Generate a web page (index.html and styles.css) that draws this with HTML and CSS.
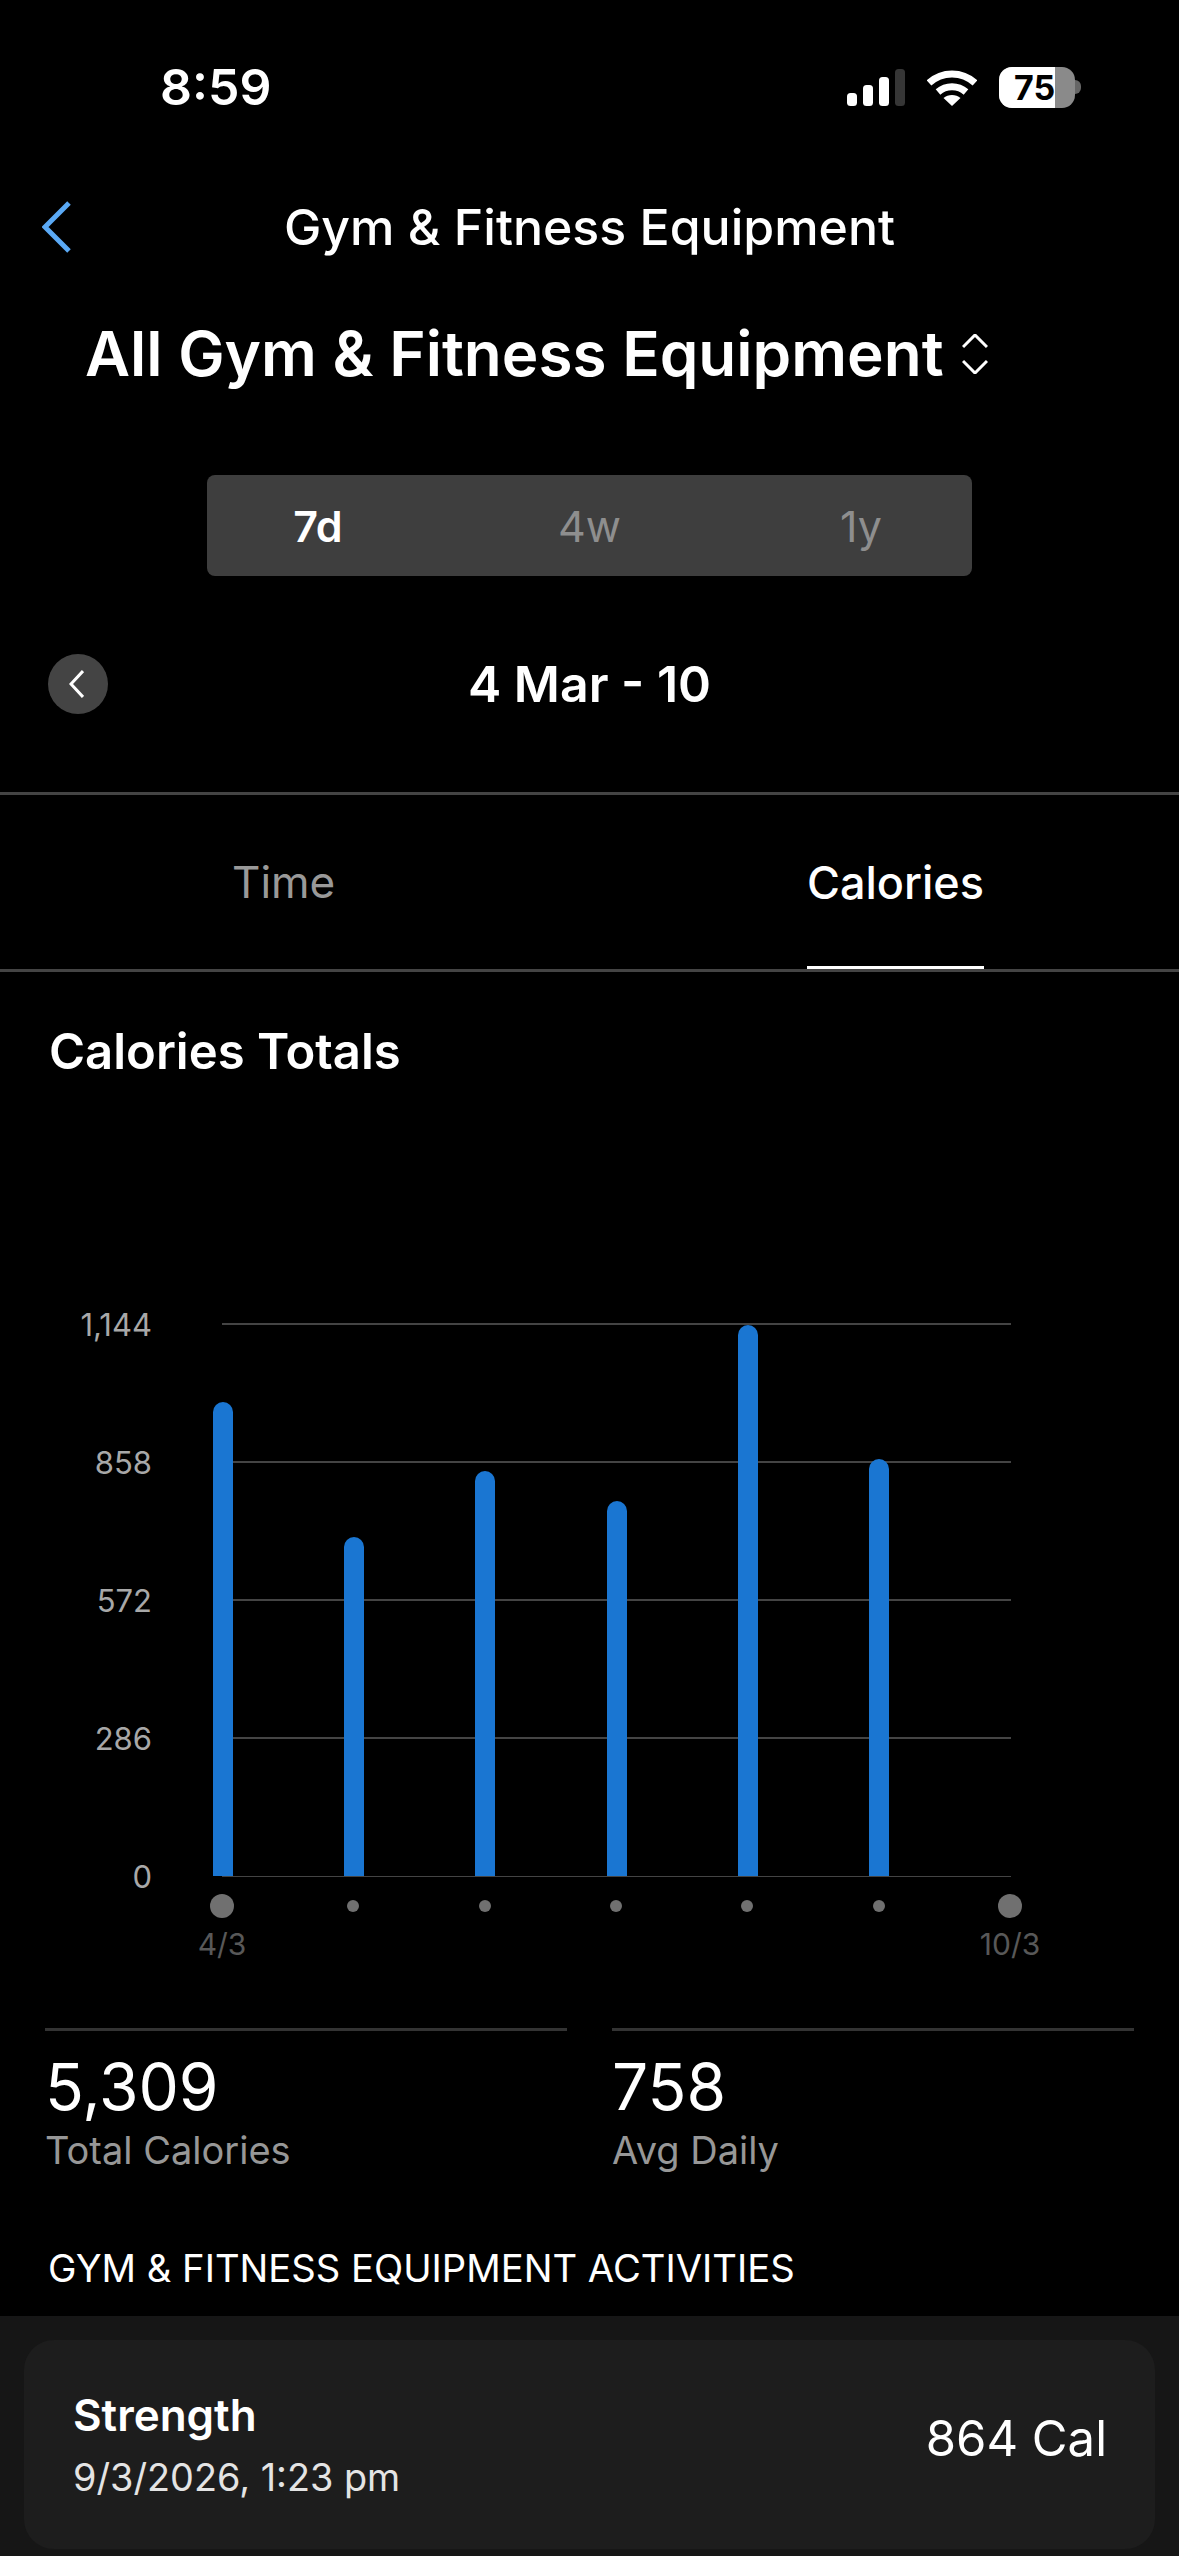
FILE: index.html
```html
<!DOCTYPE html>
<html lang="en">
<head>
  <meta charset="UTF-8" />
  <title>Gym &amp; Fitness Equipment</title>
  <link rel="stylesheet" href="styles.css">
</head>
<body>

  <!-- Status bar -->
  <div class="status-bar">
    <span class="clock">8:59</span>
    <div class="status-icons">
      <svg class="signal" width="58" height="37" viewBox="0 0 58 37">
        <rect x="0" y="24" width="10" height="13" rx="3.5" fill="#fff" />
        <rect x="16" y="16" width="10" height="21" rx="3.5" fill="#fff" />
        <rect x="32" y="8" width="10" height="29" rx="3.5" fill="#fff" />
        <rect x="48" y="0" width="10" height="37" rx="3.5" fill="#363636" />
      </svg>
      <svg class="wifi" width="50" height="37" viewBox="0 0 50 37">
        <path d="M2 14 C15 2 35 2 48 14" fill="none" stroke="#fff" stroke-width="7" />
        <path d="M11 23 C19 16 31 16 39 23" fill="none" stroke="#fff" stroke-width="7" />
        <path d="M16.5 29 C21 25 29 25 33.500 29 L25 37 Z" fill="#fff" />
      </svg>
      <div class="battery">
        <div class="battery-body">
          <div class="battery-level">75</div>
        </div>
        <div class="battery-nub"></div>
      </div>
    </div>
  </div>

  <!-- Navigation -->
  <div class="nav">
    <svg width="30" height="52" viewBox="0 0 30 52">
      <path d="M27 2 L3 26 L27 50" fill="none" stroke="#5aa9f5" stroke-width="5" />
    </svg>
    <div class="nav-title">Gym &amp; Fitness Equipment</div>
    <div></div>
  </div>

  <div class="picker">
    <h1 class="picker-title">All Gym &amp; Fitness Equipment</h1>
    <svg width="26" height="40" viewBox="0 0 26 40">
      <path d="M1 13 L13 1 L25 13 M1 27 L13 39 L25 27" fill="none" stroke="#fff" stroke-width="3" />
    </svg>
  </div>

  <div class="segments">
    <div class="segment active">7d</div>
    <div class="segment">4w</div>
    <div class="segment">1y</div>
  </div>

  <div class="date-row">
    <div class="round-btn">
      <svg width="15" height="28" viewBox="0 0 15 28">
        <path d="M14 1 L2 14 L14 27" fill="none" stroke="#fff" stroke-width="3" />
      </svg>
    </div>
    <div class="date-label">4 Mar - 10</div>
    <div></div>
  </div>

  <!-- Tabs -->
  <div class="tabs">
    <div class="tab">Time</div>
    <div class="tab active">Calories</div>
  </div>

  <h2 class="section-title">Calories Totals</h2>

  <!-- Chart -->
  <div class="chart">
    <div class="grid">
      <div class="grid-row"><span class="y-label">1,144</span><div class="grid-line"></div></div>
      <div class="grid-row"><span class="y-label">858</span><div class="grid-line"></div></div>
      <div class="grid-row"><span class="y-label">572</span><div class="grid-line"></div></div>
      <div class="grid-row"><span class="y-label">286</span><div class="grid-line"></div></div>
      <div class="grid-row"><span class="y-label">0</span><div class="grid-line base"></div></div>
    </div>
    <div class="bars">
      <div class="bar" style="height: 474px"></div>
      <div class="bar" style="height: 339px"></div>
      <div class="bar" style="height: 405px"></div>
      <div class="bar" style="height: 375px"></div>
      <div class="bar" style="height: 551px"></div>
      <div class="bar" style="height: 417px"></div>
    </div>
  </div>

  <div class="x-dots">
    <div class="dot big"></div>
    <div class="dot"></div>
    <div class="dot"></div>
    <div class="dot"></div>
    <div class="dot"></div>
    <div class="dot"></div>
    <div class="dot big"></div>
  </div>
  <div class="x-labels">
    <span class="x-label">4/3</span>
    <span class="x-label">10/3</span>
  </div>

  <!-- Totals -->
  <div class="stats">
    <div class="stat">
      <div class="stat-value">5,309</div>
      <div class="stat-label">Total Calories</div>
    </div>
    <div class="stat">
      <div class="stat-value">758</div>
      <div class="stat-label">Avg Daily</div>
    </div>
  </div>

  <div class="list-title">GYM &amp; FITNESS EQUIPMENT ACTIVITIES</div>

  <div class="list">
    <div class="card">
      <div>
        <div class="card-name">Strength</div>
        <div class="card-date">9/3/2026, 1:23 pm</div>
      </div>
      <div class="card-value">864 Cal</div>
    </div>
  </div>

</body>
</html>
```

FILE: styles.css
```css
/* General */
* {
  box-sizing: border-box;
}

body {
  width: 1179px;
  height: 2556px;
  margin: 0;
  overflow: hidden;
  background: #000;
  color: #fff;
  font-family: Inter, "Noto Sans", sans-serif;
}

/* Status bar */
.status-bar {
  display: flex;
  justify-content: space-between;
  align-items: center;
  height: 174px;
  padding: 0 98px 0 160px;
}

.clock {
  font-size: 50px;
  font-weight: 600;
}

.status-icons {
  display: flex;
  align-items: center;
  gap: 22px;
}

.battery {
  display: flex;
  align-items: center;
}

.battery-body {
  width: 76px;
  height: 41px;
  border-radius: 13px;
  background: #8a8a8a;
  overflow: hidden;
}

.battery-level {
  width: 56px;
  height: 41px;
  padding-left: 15px;
  background: #fff;
  color: #000;
  font-size: 34px;
  font-weight: 700;
  line-height: 41px;
  white-space: nowrap;
}

.battery-nub {
  width: 6px;
  height: 14px;
  border-radius: 0 7px 7px 0;
  background: #666;
}

/* Navigation */
.nav {
  display: grid;
  grid-template-columns: 1fr auto 1fr;
  align-items: center;
  height: 106px;
  padding: 0 42px;
}

.nav-title {
  font-size: 50px;
  font-weight: 500;
}

.picker {
  display: flex;
  align-items: center;
  gap: 18px;
  height: 150px;
  padding: 0 0 3px 85px;
}

.picker-title {
  margin: 0;
  font-size: 62px;
  font-weight: 600;
}

/* 7d / 4w / 1y */
.segments {
  display: grid;
  grid-template-columns: 222px 1fr 222px;
  align-items: center;
  width: 765px;
  height: 101px;
  margin: 45px auto 0;
  border-radius: 8px;
  background: #3e3e3e;
  font-size: 43px;
  color: #8e8e8e;
  text-align: center;
}

.segment.active {
  color: #fff;
  font-weight: 600;
}

.date-row {
  display: grid;
  grid-template-columns: 1fr auto 1fr;
  align-items: center;
  height: 60px;
  margin-top: 78px;
  padding: 0 48px;
}

.round-btn {
  display: flex;
  justify-content: center;
  align-items: center;
  width: 60px;
  height: 60px;
  padding-right: 4px;
  border-radius: 50%;
  background: #444;
}

.date-label {
  font-size: 50px;
  font-weight: 600;
}

/* Tabs */
.tabs {
  display: flex;
  justify-content: space-between;
  height: 180px;
  margin-top: 78px;
  padding: 0 195px 0 232px;
  border-top: 3px solid #444;
  border-bottom: 3px solid #444;
}

.tab {
  display: flex;
  align-items: center;
  font-size: 44px;
  color: #999;
}

.tab.active {
  padding-top: 3px;
  border-bottom: 3px solid #fff;
  font-size: 45px;
  font-weight: 500;
  color: #fff;
}

.section-title {
  display: flex;
  align-items: center;
  height: 158px;
  margin: 0;
  padding-left: 49px;
  font-size: 49px;
  font-weight: 600;
}

/* Chart */
.chart {
  position: relative;
  width: 1011px;
  margin-top: 193px;
}

.grid {
  display: flex;
  flex-direction: column;
  gap: 136px;
}

.grid-row {
  display: flex;
  align-items: center;
  height: 2px;
}

.y-label {
  width: 152px;
  flex-shrink: 0;
  font-size: 31px;
  color: #a8a8a8;
  text-align: right;
}

.grid-line {
  flex: 1;
  height: 2px;
  margin-left: 70px;
  background: #444;
}

.grid-line.base {
  height: 1px;
}

.bars {
  position: absolute;
  left: 213px;
  bottom: 1px;
  display: flex;
  align-items: flex-end;
  gap: 111.2px;
}

.bar {
  width: 20px;
  border-radius: 10px 10px 0 0;
  background: #1a76d2;
}

.x-dots {
  display: flex;
  justify-content: space-between;
  align-items: center;
  width: 812px;
  height: 24px;
  margin: 17px 0 0 210px;
}

.dot {
  width: 12px;
  height: 12px;
  margin: 0 6px;
  border-radius: 50%;
  background: #707070;
}

.dot.big {
  width: 24px;
  height: 24px;
  margin: 0;
}

.x-labels {
  display: flex;
  justify-content: space-between;
  width: 888px;
  margin: 10px 0 0 172px;
}

.x-label {
  width: 100px;
  font-size: 30px;
  line-height: 32px;
  color: #585858;
  text-align: center;
}

/* Totals */
.stats {
  display: grid;
  grid-template-columns: 1fr 1fr;
  gap: 45px;
  margin-top: 68px;
  padding: 0 45px;
}

.stat {
  padding-top: 20px;
  border-top: 3px solid #333;
}

.stat-value {
  font-size: 64px;
  line-height: 72px;
}

.stat-label {
  margin-top: 5px;
  font-size: 38px;
  line-height: 44px;
  color: #979797;
}

.list-title {
  margin-top: 74px;
  padding-left: 48px;
  font-size: 38.2px;
  line-height: 44px;
}

/* Activity list */
.list {
  height: 240px;
  margin-top: 26px;
  padding: 24px;
  background: #161616;
}

.card {
  display: flex;
  justify-content: space-between;
  align-items: center;
  height: 209px;
  padding: 0 48px 0 49px;
  border-radius: 30px;
  background: #1d1d1d;
}

.card-name {
  font-size: 44px;
  font-weight: 600;
  line-height: 50px;
}

.card-date {
  margin-top: 14px;
  font-size: 37.800px;
  line-height: 46px;
  color: #e4e4e4;
}

.card-value {
  padding-bottom: 12px;
  font-size: 49px;
}
```
